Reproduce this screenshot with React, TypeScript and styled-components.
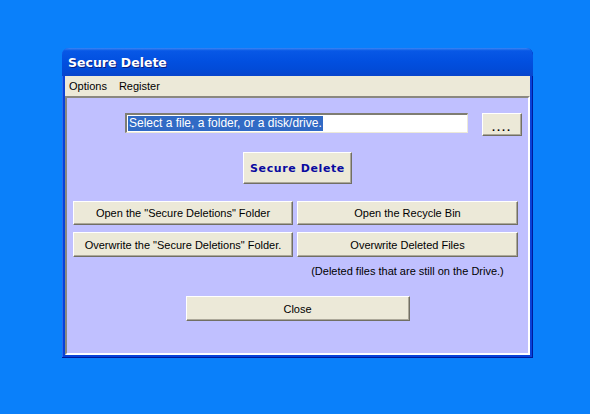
import React from "react";
import styled, { createGlobalStyle } from "styled-components";

const GlobalStyle = createGlobalStyle`
  html, body {
    margin: 0;
    padding: 0;
  }
  body {
    font-family: "Liberation Sans", Arial, sans-serif;
  }
`;

const Desktop = styled.div`
  position: relative;
  width: 590px;
  height: 414px;
  background: #0a80fa;
  overflow: hidden;
`;

const Window = styled.div`
  position: absolute;
  left: 62px;
  top: 48px;
  width: 471px;
  height: 310px;
  display: flex;
  flex-direction: column;
  background: #0842d8;
  border-radius: 7px 7px 0 0;
  box-sizing: border-box;
  padding: 0 3px 3px 3px;
  box-shadow: inset -1px -1px 0 #001a9c, inset 1px 0 0 #2a6cf0;
`;

const TitleBar = styled.div`
  height: 28px;
  margin: 0 -3px;
  padding: 0 6px;
  display: flex;
  align-items: center;
  border-radius: 7px 7px 0 0;
  background: linear-gradient(
    to bottom,
    #3b86f5 0%,
    #0858e6 10%,
    #0250e0 45%,
    #024bd8 75%,
    #0845cc 100%
  );
  color: #ffffff;
  font-family: "DejaVu Sans", Verdana, sans-serif;
  font-weight: bold;
  font-size: 12.5px;
  text-shadow: 1px 1px 0 #0a1f80;
`;

const MenuBar = styled.div`
  height: 20px;
  display: flex;
  align-items: center;
  gap: 12px;
  padding: 0 4px;
  background: #ece9d8;
  font-size: 11px;
  color: #000000;
`;

const MenuItem = styled.span`
  cursor: default;
`;

const Client = styled.div`
  flex: 1;
  display: flex;
  flex-direction: column;
  align-items: center;
  background: #c0c0ff;
  border-top: 2px solid #8a8880;
  border-left: 2px solid #8a8880;
  border-right: 2px solid #ffffff;
  border-bottom: 2px solid #ffffff;
`;

const PathRow = styled.div`
  align-self: stretch;
  display: flex;
  align-items: flex-start;
  margin-top: 15px;
  padding-left: 58px;
  gap: 14px;
`;

const PathBox = styled.div`
  width: 343px;
  height: 20px;
  box-sizing: border-box;
  background: #ffffff;
  border-top: 2px solid #7f7d72;
  border-left: 2px solid #7f7d72;
  border-right: 1px solid #ece9d8;
  border-bottom: 1px solid #ece9d8;
  display: flex;
  align-items: center;
  padding-left: 1px;
`;

const Selected = styled.span`
  background: #316ac5;
  color: #ffffff;
  font-size: 12px;
  line-height: 15px;
  padding: 0 1px;
`;

const Button = styled.button<{ $w: number; $h: number; $bold?: boolean }>`
  width: ${(p) => p.$w}px;
  height: ${(p) => p.$h}px;
  box-sizing: border-box;
  background: #ece9d8;
  border-top: 1px solid #ffffff;
  border-left: 1px solid #ffffff;
  border-right: 1px solid #716f64;
  border-bottom: 1px solid #716f64;
  box-shadow: inset -1px -1px 0 #aca899;
  padding: 0;
  font-family: ${(p) =>
    p.$bold ? '"DejaVu Sans", Verdana, sans-serif' : '"Liberation Sans", Arial, sans-serif'};
  font-size: 11px;
  font-weight: ${(p) => (p.$bold ? "bold" : "normal")};
  letter-spacing: ${(p) => (p.$bold ? "0.6px" : "0")};
  color: ${(p) => (p.$bold ? "#0a0aa0" : "#000000")};
  cursor: default;
`;

const BrowseButton = styled(Button)`
  display: flex;
  align-items: flex-end;
  justify-content: center;
  padding-bottom: 4px;
  font-weight: bold;
  letter-spacing: 2px;
  line-height: 8px;
`;

const ActionGrid = styled.div`
  align-self: stretch;
  display: grid;
  grid-template-columns: 220px 221px;
  column-gap: 4px;
  row-gap: 7px;
  padding-left: 6px;
  margin-top: 17px;
`;

const Note = styled.div`
  grid-column: 2;
  text-align: center;
  font-size: 11px;
  color: #000000;
  margin-top: 1px;
`;

export default function App() {
  return (
    <>
      <GlobalStyle />
      <Desktop>
        <Window>
          <TitleBar>Secure Delete</TitleBar>
          <MenuBar>
            <MenuItem>Options</MenuItem>
            <MenuItem>Register</MenuItem>
          </MenuBar>
          <Client>
            <PathRow>
              <PathBox>
                <Selected>Select a file, a folder, or a disk/drive.</Selected>
              </PathBox>
              <BrowseButton $w={40} $h={23}>
                ....
              </BrowseButton>
            </PathRow>
            <Button $w={109} $h={32} $bold style={{ marginTop: 16 }}>
              Secure Delete
            </Button>
            <ActionGrid>
              <Button $w={220} $h={24}>
                Open the "Secure Deletions" Folder
              </Button>
              <Button $w={221} $h={24}>
                Open the Recycle Bin
              </Button>
              <Button $w={220} $h={25}>
                Overwrite the "Secure Deletions" Folder.
              </Button>
              <Button $w={221} $h={25}>
                Overwrite Deleted Files
              </Button>
              <Note>(Deleted files that are still on the Drive.)</Note>
            </ActionGrid>
            <Button $w={224} $h={25} style={{ marginTop: 19 }}>
              Close
            </Button>
          </Client>
        </Window>
      </Desktop>
    </>
  );
}
